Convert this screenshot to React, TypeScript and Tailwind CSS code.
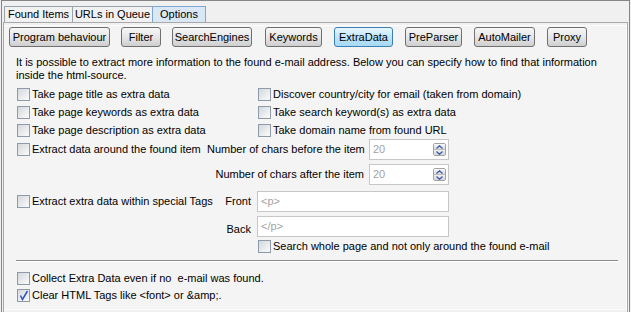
import type { ReactNode } from "react"

const buttons = [
  { label: "Program behaviour", cls: "ml-[5px] w-[101px]" },
  { label: "Filter", cls: "ml-[11px] w-[40px]" },
  { label: "SearchEngines", cls: "ml-[11px] w-[80px]" },
  { label: "Keywords", cls: "ml-[13px] w-[57px]" },
  { label: "ExtraData", cls: "ml-[12px] w-[59px]", active: true },
  { label: "PreParser", cls: "ml-[12px] w-[57px]" },
  { label: "AutoMailer", cls: "ml-[12px] w-[61px]" },
  { label: "Proxy", cls: "ml-[12px] w-[40px]" },
]

function Check({ checked, children }: { checked?: boolean; children: ReactNode }) {
  return (
    <label className="flex items-center gap-[2px] whitespace-nowrap">
      <span className="flex h-[13px] w-[13px] shrink-0 items-center justify-center border border-[#8e9aa8] bg-linear-to-br from-[#d4d8dd] to-[#fbfbfb]">
        {checked && (
          <svg width="11" height="11" viewBox="0 0 11 11">
            <path d="M2.5 5.5 L4.5 9.5 L9.5 1" fill="none" stroke="#2f52c8" strokeWidth="1.5" />
          </svg>
        )}
      </span>
      <span>{children}</span>
    </label>
  )
}

function Spin() {
  return (
    <div className="flex h-[13px] w-[13px] flex-col overflow-hidden rounded-[2px] border border-[#a3a3a3]">
      <div className="flex flex-1 items-center justify-center bg-linear-to-b from-[#fafafa] to-[#d9d9d9]">
        <svg width="7" height="4" viewBox="0 0 7 4">
          <path d="M0.5 3.5 L3.5 0.8 L6.5 3.5" fill="none" stroke="#3456a8" strokeWidth="1.2" />
        </svg>
      </div>
      <div className="flex flex-1 items-center justify-center border-t border-[#bdbdbd] bg-linear-to-b from-[#f2f2f2] to-[#d2d2d2]">
        <svg width="7" height="4" viewBox="0 0 7 4">
          <path d="M0.5 0.5 L3.5 3.2 L6.5 0.5" fill="none" stroke="#3456a8" strokeWidth="1.2" />
        </svg>
      </div>
    </div>
  )
}

function Field({ value, className, spin }: { value: string; className: string; spin?: boolean }) {
  return (
    <div className={`flex h-[21px] items-center border border-[#c7c7c7] bg-white pl-[3px] pr-[2px] text-[#a3a3a3] ${className}`}>
      <span className="flex-1">{value}</span>
      {spin && <Spin />}
    </div>
  )
}

export default function App() {
  return (
    <div className="h-[312px] w-[631px] overflow-hidden bg-[#f0f0f0] font-['Liberation_Sans',Arial,sans-serif] text-[11px] leading-[13px] text-black">
      <div className="ml-[1px] flex h-full w-[629px] flex-col border-t border-r border-l border-[#858585]">
        {/* Tabs */}
        <div className="flex h-[21px] shrink-0 items-end pl-[2px]">
          <div className="flex h-[16px] w-[68px] items-center justify-center border-t border-l border-[#9ba3aa] bg-[#f1f1f1]">
            Found Items
          </div>
          <div className="flex h-[16px] w-[80px] items-center justify-center border-t border-l border-[#9ba3aa] bg-[#f1f1f1]">
            URLs in Queue
          </div>
          <div className="flex h-[16px] w-[54px] items-center justify-center border-t border-r border-l border-[#7fa6d2] bg-[#dae8f6]">
            Options
          </div>
        </div>

        {/* Tab panel */}
        <div className="ml-[1px] w-[625px] flex-1 border-t border-r border-l border-[#a9a9a9] bg-[#f0f0f0] pt-[2px]">
          <div className="h-[285px] border-t border-r border-b border-[#fcfcfc] bg-[#f4f4f4]">
            {/* Sub tabs as buttons */}
            <div className="mt-[1px] flex h-[20px]">
              {buttons.map((b) => (
                <div
                  key={b.label}
                  className={`flex h-[20px] items-center justify-center whitespace-nowrap rounded-[3px] border ${b.cls} ${
                    b.active
                      ? "border-[#3c7fb1] bg-linear-to-b from-[#eaf6fd] via-[#bee6fd] to-[#a7d9f5]"
                      : "border-[#707070] bg-linear-to-b from-[#f6f6f6] via-[#e6e6e6] to-[#cfcfcf]"
                  }`}
                >
                  {b.label}
                </div>
              ))}
            </div>

            <p className="mt-[9px] whitespace-nowrap pl-[12px]">
              It is possible to extract more information to the found e-mail address. Below you can specify how to find that information
              <br />
              inside the html-source.
            </p>

            <div className="mt-[3px] flex h-[18px] items-center pl-[13px]">
              <div className="w-[241px]">
                <Check>Take page title as extra data</Check>
              </div>
              <Check>Discover country/city for email (taken from domain)</Check>
            </div>
            <div className="flex h-[18px] items-center pl-[13px]">
              <div className="w-[241px]">
                <Check>Take page keywords as extra data</Check>
              </div>
              <Check>Take search keyword(s) as extra data</Check>
            </div>
            <div className="flex h-[18px] items-center pl-[13px]">
              <div className="w-[241px]">
                <Check>Take page description as extra data</Check>
              </div>
              <Check>Take domain name from found URL</Check>
            </div>

            <div className="flex h-[21px] items-center pl-[13px]">
              <div className="w-[190px]">
                <Check>Extract data around the found item</Check>
              </div>
              <span className="w-[157px] whitespace-nowrap text-right">Number of chars before the item</span>
              <Field value="20" className="ml-[5px] w-[80px]" spin />
            </div>
            <div className="mt-[4px] flex h-[21px] items-center pl-[13px]">
              <span className="w-[347px] whitespace-nowrap text-right">Number of chars after the item</span>
              <Field value="20" className="ml-[5px] w-[80px]" spin />
            </div>

            <div className="mt-[6px] flex h-[21px] items-center pl-[13px]">
              <div className="flex w-[234px] items-center justify-between">
                <Check>Extract extra data within special Tags</Check>
                <span>Front</span>
              </div>
              <Field value="<p>" className="ml-[6px] w-[192px]" />
            </div>
            <div className="mt-[4px] flex h-[21px] items-center pl-[13px]">
              <span className="w-[234px] pt-[5px] text-right">Back</span>
              <Field value="</p>" className="ml-[6px] w-[192px]" />
            </div>
            <div className="mt-[3px] flex h-[13px] items-center pl-[254px]">
              <Check>Search whole page and not only around the found e-mail</Check>
            </div>

            <div className="mt-[7px] ml-[12px] w-[602px] border-t border-b border-t-[#8a8a8a] border-b-white" />

            <div className="mt-[8px] flex h-[17px] items-center pl-[13px]">
              <Check>Collect Extra Data even if no&nbsp; e-mail was found.</Check>
            </div>
            <div className="flex h-[17px] items-center pl-[13px]">
              <Check checked>Clear HTML Tags like &lt;font&gt; or &amp;amp;.</Check>
            </div>
          </div>
        </div>
      </div>
    </div>
  )
}
